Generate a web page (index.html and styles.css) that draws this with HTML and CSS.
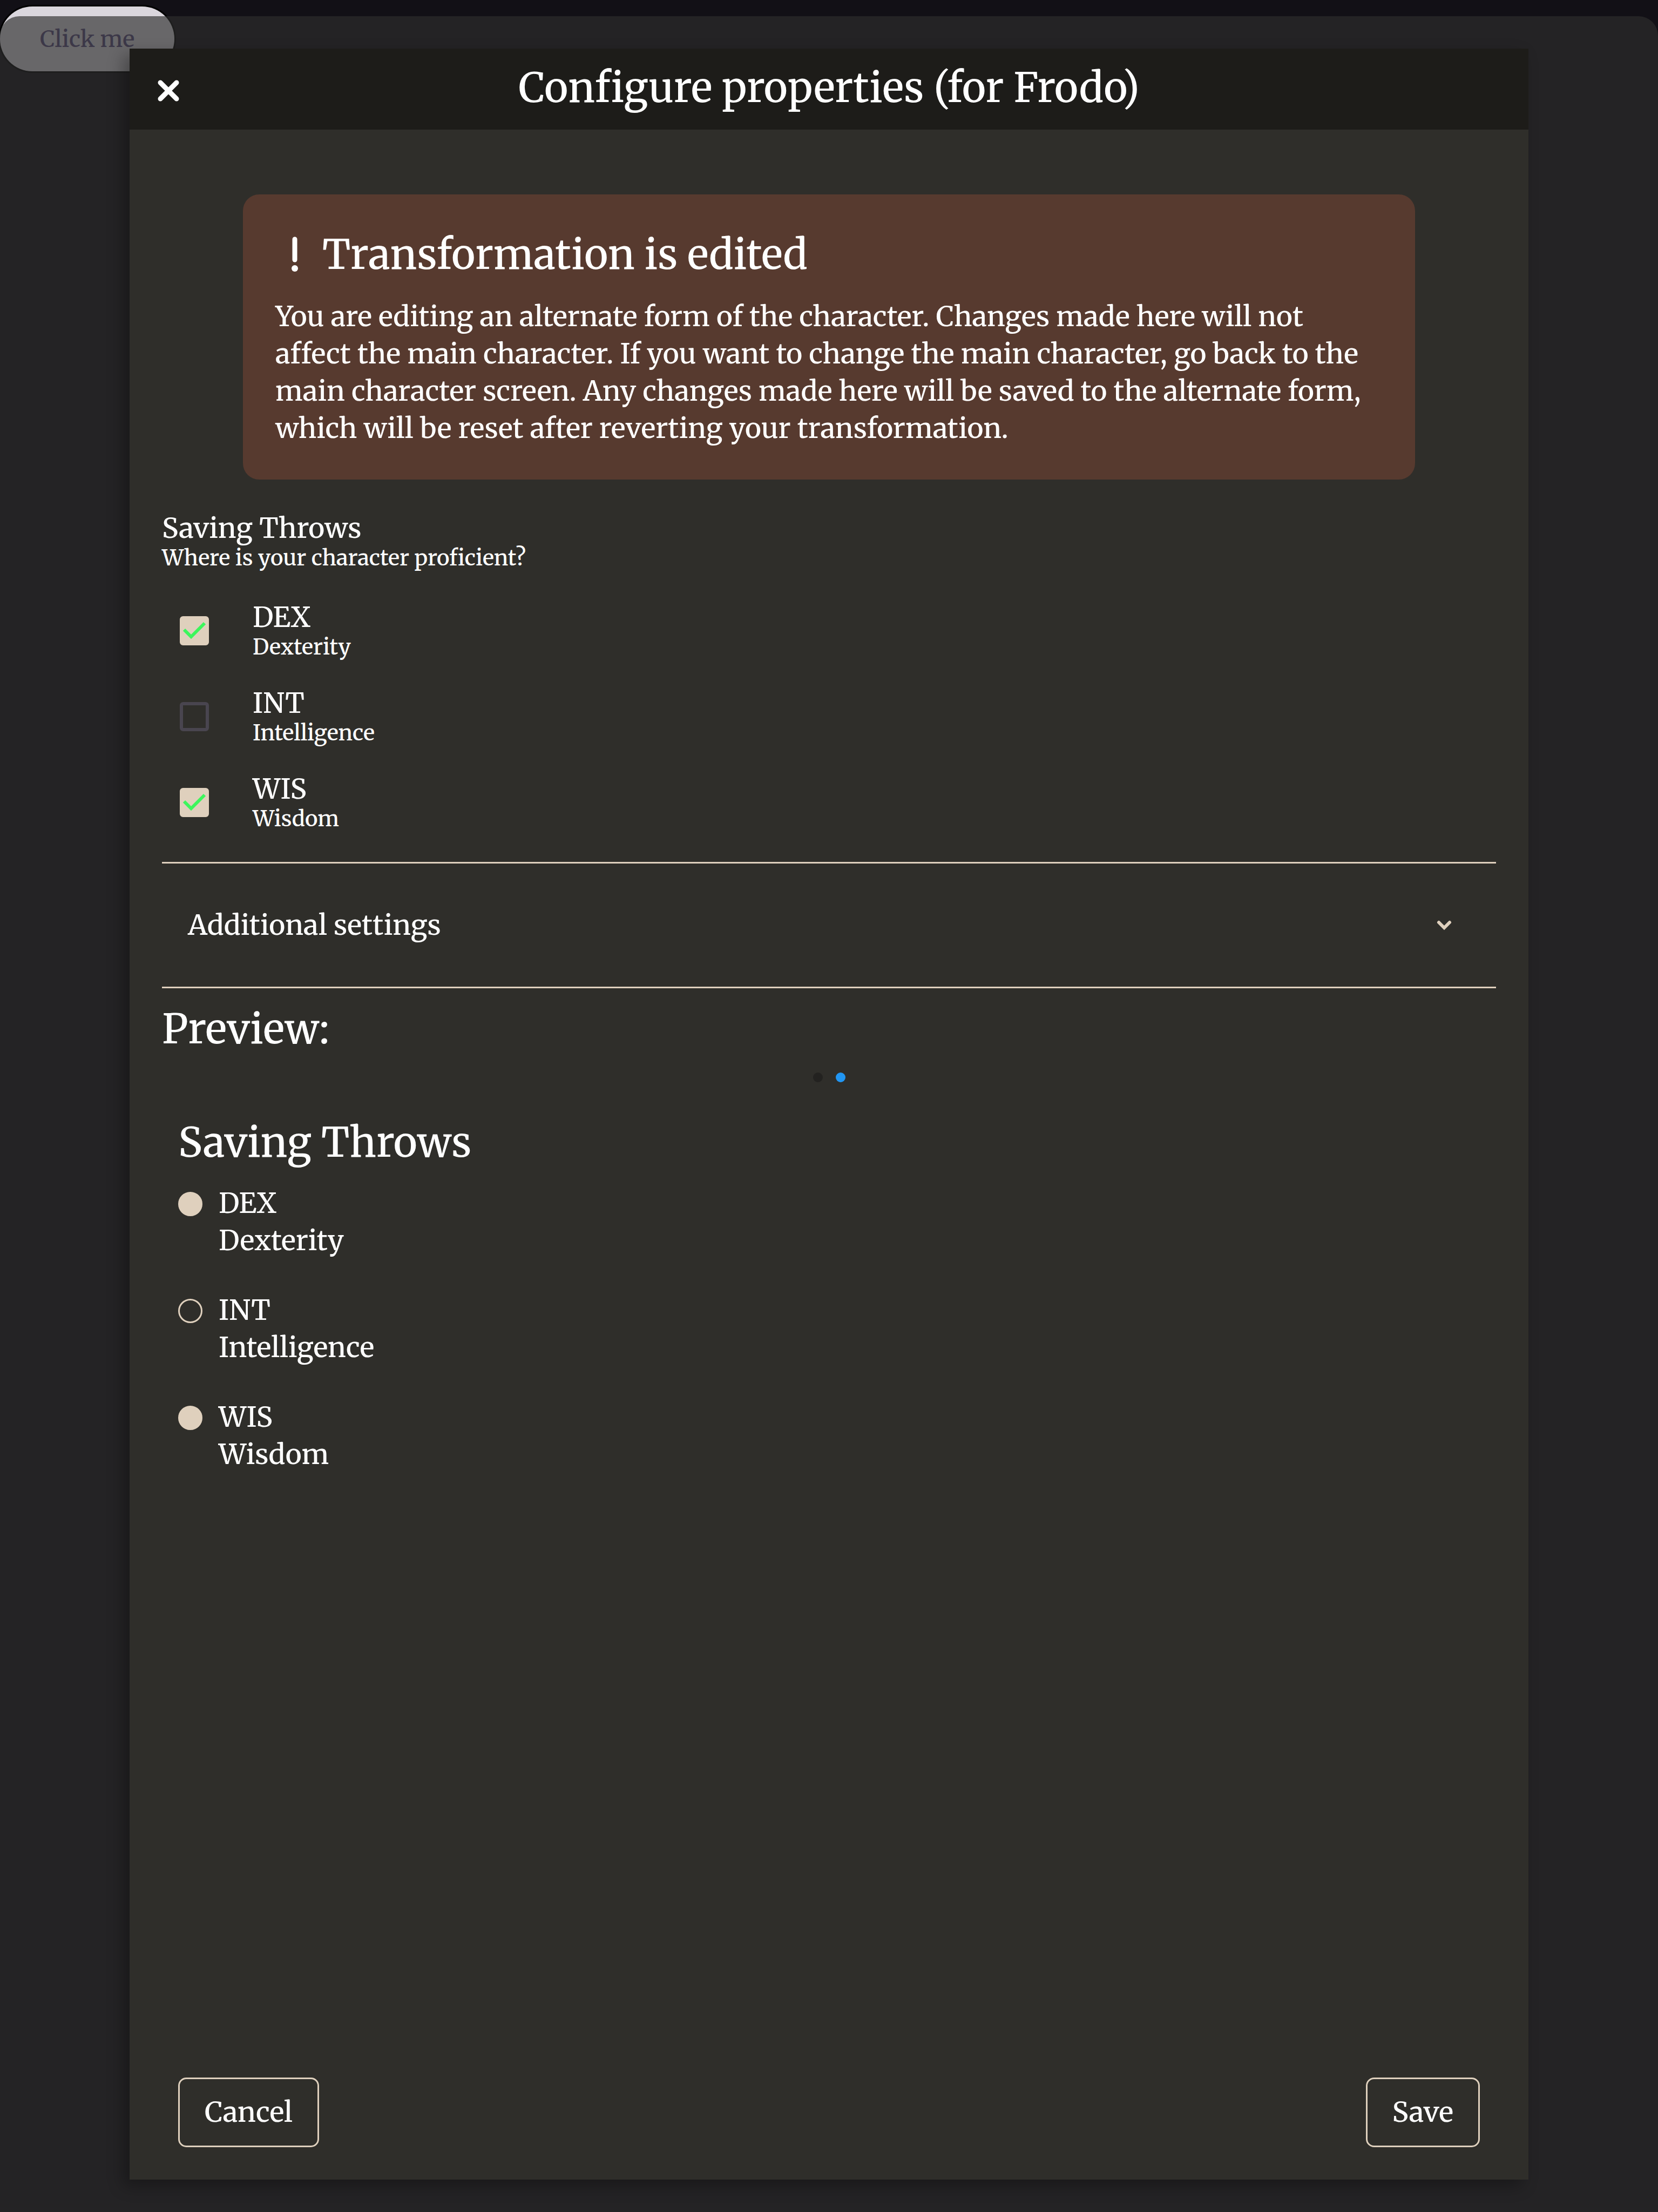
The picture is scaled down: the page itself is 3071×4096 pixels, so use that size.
FILE: index.html
```
<!DOCTYPE html>
<html lang="en">
<head>
  <meta charset="utf-8">
  <title>Configure properties</title>
  <link rel="stylesheet" href="styles.css">
</head>
<body>
  <button class="launcher" type="button">Click me</button>

  <div class="scrim">
    <section class="dialog" role="dialog" aria-modal="true" aria-labelledby="dialog-title">
      <header class="dialog-header">
        <button class="close" type="button" aria-label="Close">
          <svg viewBox="0 0 48 48" aria-hidden="true"><path d="M9 9 39 39M39 9 9 39"/></svg>
        </button>
        <h1 class="title" id="dialog-title">Configure properties (for Frodo)</h1>
      </header>

      <div class="dialog-body">
        <aside class="alert">
          <div class="alert-heading">
            <svg class="alert-icon" viewBox="0 0 72 72" aria-hidden="true"><path d="M36 8V46"/><circle cx="36" cy="62" r="6"/></svg>
            <h2 class="title">Transformation is edited</h2>
          </div>
          <p class="alert-text">You are editing an alternate form of the character. Changes made here will not affect the main character. If you want to change the main character, go back to the main character screen. Any changes made here will be saved to the alternate form, which will be reset after reverting your transformation.</p>
        </aside>

        <fieldset class="throws">
          <legend class="throws-legend">
            <span class="label">Saving Throws</span>
            <span class="hint">Where is your character proficient?</span>
          </legend>
          <div class="options">
            <label class="option">
              <span class="check"><input type="checkbox" checked><svg viewBox="0 0 54 54" aria-hidden="true"><path d="M8 25 21 38 46 13"/></svg></span>
              <span class="option-text"><span class="label">DEX</span><span class="hint">Dexterity</span></span>
            </label>
            <label class="option">
              <span class="check"><input type="checkbox"><svg viewBox="0 0 54 54" aria-hidden="true"><path d="M8 25 21 38 46 13"/></svg></span>
              <span class="option-text"><span class="label">INT</span><span class="hint">Intelligence</span></span>
            </label>
            <label class="option">
              <span class="check"><input type="checkbox" checked><svg viewBox="0 0 54 54" aria-hidden="true"><path d="M8 25 21 38 46 13"/></svg></span>
              <span class="option-text"><span class="label">WIS</span><span class="hint">Wisdom</span></span>
            </label>
          </div>
        </fieldset>

        <button class="accordion" type="button" aria-expanded="false">
          <span>Additional settings</span>
          <svg viewBox="0 0 72 72" aria-hidden="true"><path d="M26 31 36 41 46 31"/></svg>
        </button>

        <section class="preview">
          <h2 class="title">Preview:</h2>
          <div class="dots"><span class="dot"></span><span class="dot dot-active"></span></div>
          <div class="card">
            <h3 class="title">Saving Throws</h3>
            <ul class="stats">
              <li class="stat"><span class="pip pip-filled"></span><span class="stat-text"><span>DEX</span><span>Dexterity</span></span></li>
              <li class="stat"><span class="pip"></span><span class="stat-text"><span>INT</span><span>Intelligence</span></span></li>
              <li class="stat"><span class="pip pip-filled"></span><span class="stat-text"><span>WIS</span><span>Wisdom</span></span></li>
            </ul>
          </div>
        </section>
      </div>

      <footer class="dialog-footer">
        <button class="action" type="button">Cancel</button>
        <button class="action" type="button">Save</button>
      </footer>
    </section>
  </div>
</body>
</html>
```
FILE: styles.css
```
:root {
  --sand: #dfd0bd;
  --panel: #2f2e2a;
  --header: #1d1c19;
  --alert: #573a2f;
  --text-small: 40px;
  --text: 51px;
  --text-large: 75px;
}

* {
  box-sizing: border-box;
  margin: 0;
  padding: 0;
}

body {
  position: relative;
  min-height: 100vh;
  padding-top: 12px;
  background: #121016;
  color: #fff;
  font: 500 var(--text)/69px Merriweather, "Noto Serif", "DejaVu Serif", serif;
  overflow-x: hidden;
}

button {
  border: 0;
  background: none;
  color: inherit;
  font: inherit;
  cursor: pointer;
}

svg {
  display: block;
  fill: none;
  stroke: currentColor;
}

.launcher {
  display: block;
  padding: 0 74px;
  border-radius: 60px;
  background: #dad6dd;
  box-shadow: 0 0 0 3px #000;
  color: #594e7d;
  font-size: 42px;
  line-height: 120px;
}

.scrim {
  position: absolute;
  inset: 30px 0 0;
  display: flex;
  padding: 60px 240px;
  border-radius: 36px 36px 0 0;
  background: rgba(45, 45, 45, 0.66);
}

.dialog {
  flex: 1;
  display: flex;
  flex-direction: column;
  background: var(--panel);
  box-shadow: -12px 12px 27px rgba(0, 0, 0, 0.3);
}

.title {
  font-size: var(--text-large);
  font-weight: 500;
  line-height: 90px;
}

.dialog-header {
  display: grid;
  grid-template-columns: 144px 1fr 144px;
  align-items: center;
  height: 150px;
  background: var(--header);
}

.dialog-header .title {
  padding-bottom: 6px;
  text-align: center;
}

.close {
  justify-self: center;
  padding-top: 6px;
}

.close svg {
  width: 48px;
  height: 48px;
  stroke-width: 9;
  stroke-linecap: round;
}

.dialog-body {
  flex: 1;
  padding: 120px 60px 60px;
}

.alert {
  margin: 0 150px;
  padding: 66px 72px 60px 60px;
  border-radius: 30px;
  background: var(--alert);
}

.alert-heading {
  display: flex;
  align-items: center;
  gap: 15px;
  margin-bottom: 36px;
}

.alert-icon {
  width: 72px;
  height: 72px;
  stroke-width: 9;
  stroke-linecap: round;
}

.alert-icon circle {
  fill: currentColor;
  stroke: none;
}

.throws {
  padding-top: 60px;
  border: 0;
}

.throws-legend {
  float: left;
  width: 100%;
}

.label,
.hint {
  display: block;
}

.label {
  line-height: 60px;
}

.hint {
  font-size: var(--text-small);
  line-height: 50px;
}

.options {
  clear: both;
  display: grid;
  gap: 49px;
  padding: 55px 0;
}

.option {
  display: flex;
  align-items: center;
  gap: 81px;
  padding-left: 33px;
}

.check {
  display: grid;
  color: #3cf65c;
}

.check > * {
  grid-area: 1 / 1;
  width: 54px;
  height: 54px;
}

.check input {
  appearance: none;
  border: 6px solid #49454f;
  border-radius: 6px;
}

.check input:checked {
  border-color: var(--sand);
  background: var(--sand);
}

.check svg {
  stroke-width: 6;
  pointer-events: none;
}

.check input:not(:checked) + svg {
  visibility: hidden;
}

.accordion {
  display: flex;
  justify-content: space-between;
  align-items: center;
  width: 100%;
  height: 234px;
  padding: 0 60px 0 48px;
  border: solid var(--sand);
  border-width: 3px 0;
}

.accordion svg {
  width: 72px;
  height: 72px;
  color: var(--sand);
  stroke-width: 6;
  stroke-linecap: round;
}

.preview {
  padding-top: 30px;
}

.dots {
  display: flex;
  justify-content: center;
  gap: 24px;
  padding: 36px 0 66px;
}

.dot {
  width: 18px;
  height: 18px;
  border-radius: 50%;
  background: #232220;
}

.dot-active {
  background: #2196f3;
}

.card {
  padding: 0 30px;
}

.stats {
  display: grid;
  gap: 60px;
  padding-top: 34px;
  list-style: none;
}

.stat {
  display: flex;
  gap: 30px;
}

.pip {
  width: 45px;
  height: 45px;
  margin: 13px 0;
  border: 3px solid var(--sand);
  border-radius: 50%;
}

.pip-filled {
  background: var(--sand);
}

.stat-text {
  display: grid;
}

.dialog-footer {
  display: flex;
  justify-content: space-between;
  padding: 0 90px 60px;
}

.action {
  padding: 27px 46px;
  border: 3px solid var(--sand);
  border-radius: 15px;
}
```
